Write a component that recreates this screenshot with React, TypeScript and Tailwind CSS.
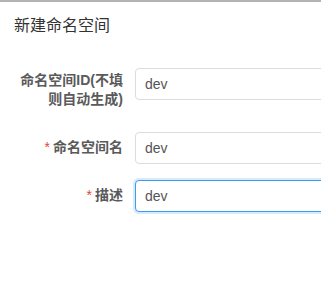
import React from 'react';

const font = { fontFamily: '"Liberation Sans", "Noto Sans CJK SC", sans-serif' };

interface FieldProps {
  label: React.ReactNode;
  value: string;
  required?: boolean;
  focused?: boolean;
  tall?: boolean;
}

// One horizontal form row: right-aligned label, then the text box
const Field: React.FC<FieldProps> = ({ label, value, required = false, focused = false, tall = false }) => {
  return (
    <div className={`flex items-start mb-[16px] ${tall ? 'h-[48px]' : 'h-[32px]'}`}>
      <label
        className={`w-[123px] shrink-0 text-right text-[14px] leading-[19px] font-bold text-[#5a5a5a] ${
          tall ? 'pt-[3px]' : 'pt-[6px]'
        }`}
      >
        {required && <span className="text-[#e2463a] font-normal mr-[3px]">*</span>}
        {label}
      </label>
      <input
        readOnly
        value={value}
        className={`ml-[12px] w-[240px] shrink-0 h-[32px] px-[9px] rounded-[4px] border text-[14px] text-[#555] bg-white outline-none ${
          focused ? 'border-[#3d9bf0] shadow-[0_0_0_2px_#d7eafc]' : 'border-[#dcdcdc]'
        }`}
        style={font}
      />
    </div>
  );
};

export default function App() {
  return (
    <div className="w-[321px] h-[302px] bg-white overflow-hidden" style={font}>
      <div className="h-[2px] bg-[#b3b3b3]" />
      <div className="pl-[14px] pt-[12px] text-[16px] leading-[24px] text-[#333]">新建命名空间</div>
      <div className="mt-[30px]">
        <Field
          tall
          label={
            <>
              命名空间ID(不填
              <br />
              则自动生成)
            </>
          }
          value="dev"
        />
        <Field required label="命名空间名" value="dev" />
        <Field required focused label="描述" value="dev" />
      </div>
    </div>
  );
}
